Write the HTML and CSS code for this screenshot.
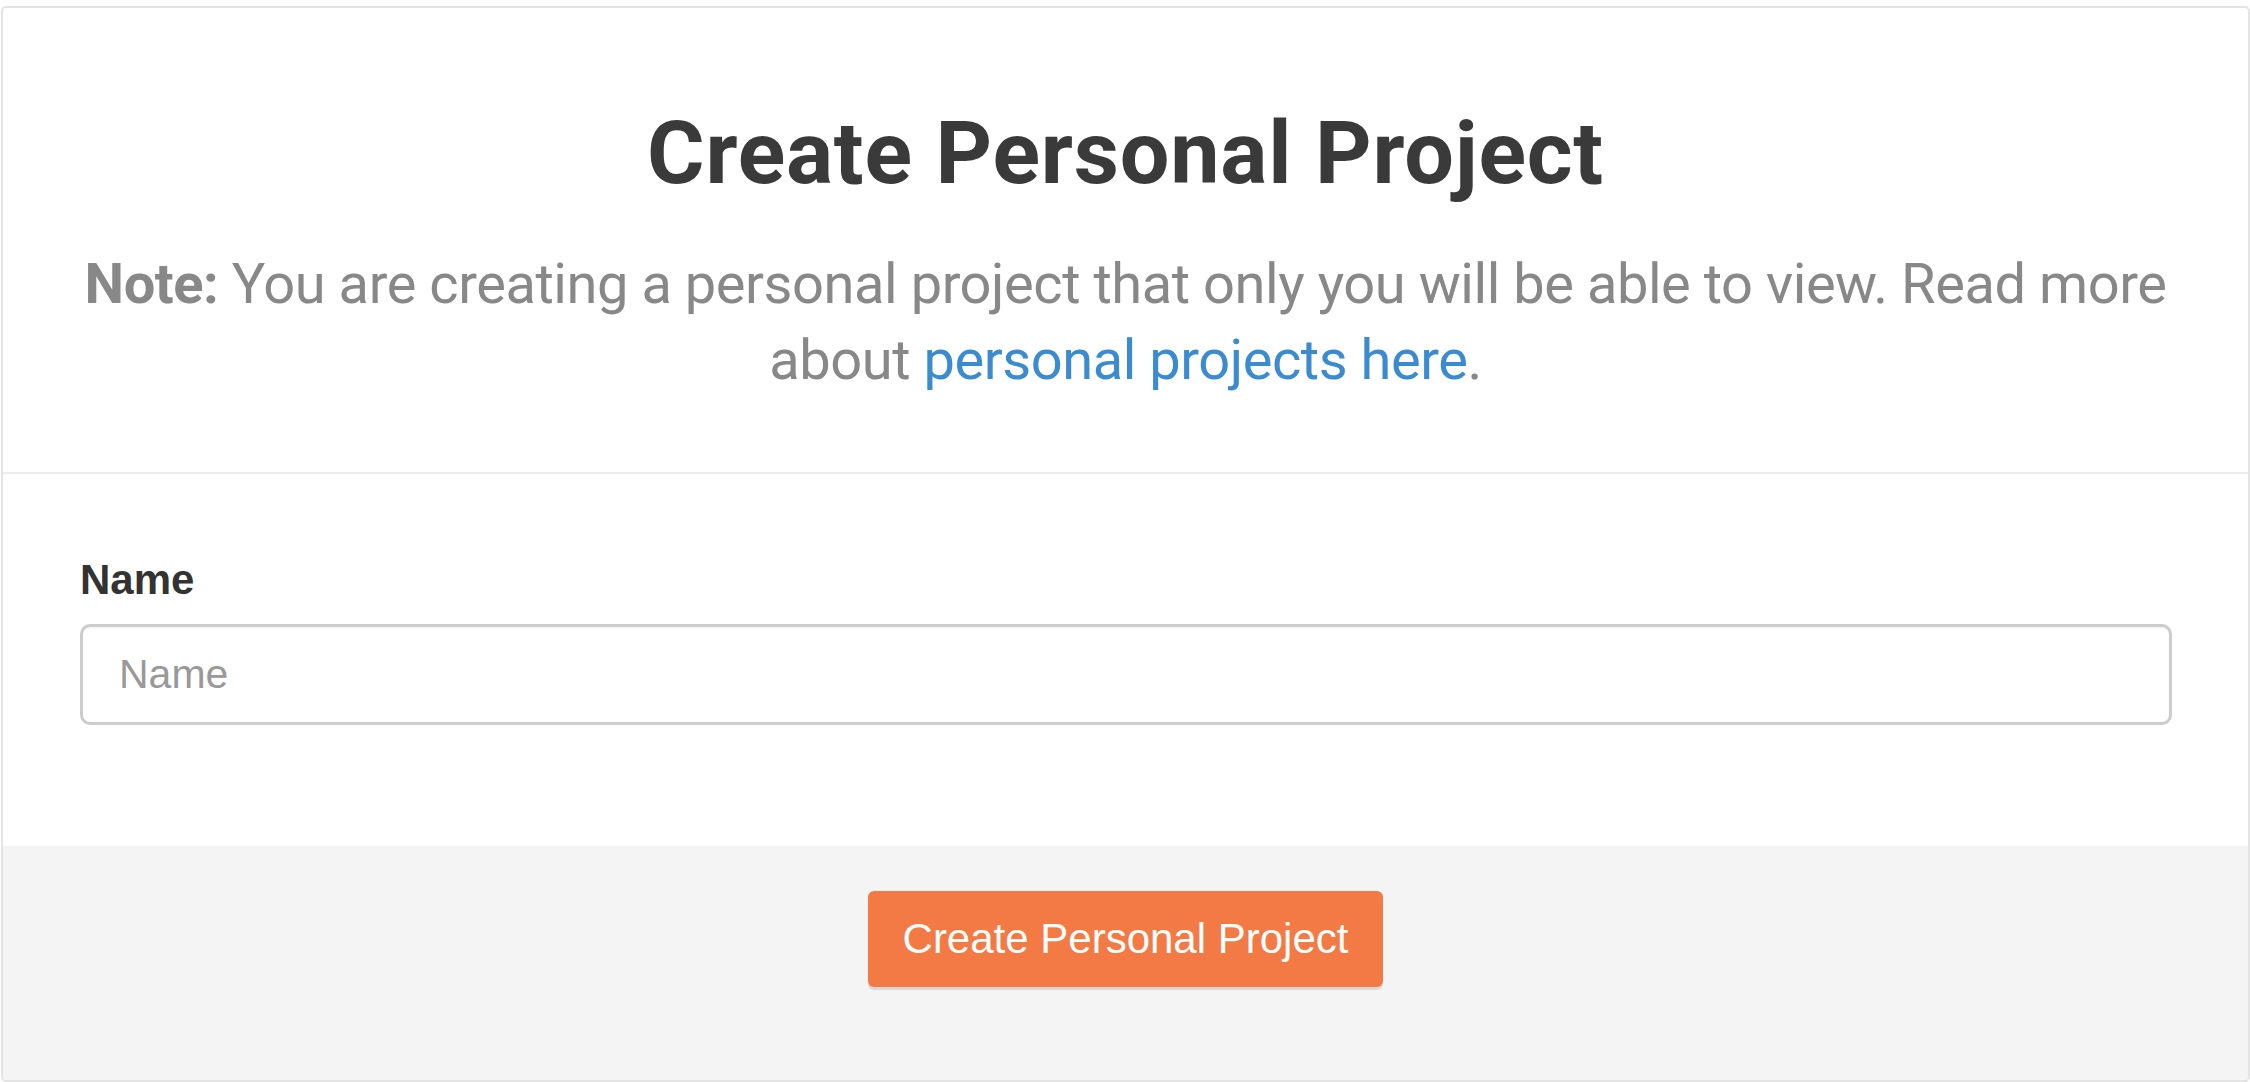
FILE: index.html
```html
<!DOCTYPE html>
<html lang="en">
<head>
<meta charset="utf-8">
<title>Create Personal Project</title>
<link rel="stylesheet" href="styles.css">
</head>
<body>
<div class="card">
  <header class="card-header">
    <h1 class="title">Create Personal Project</h1>
    <p class="note"><strong>Note:</strong> You are creating a personal project that only you will be able to view. Read more about <a href="#" class="link">personal projects here</a>.</p>
  </header>
  <form class="card-body">
    <label class="label" for="name">Name</label>
    <input class="input" id="name" type="text" placeholder="Name">
  </form>
  <footer class="card-footer">
    <button class="btn" type="button">Create Personal Project</button>
  </footer>
</div>
</body>
</html>
```
FILE: styles.css
```css
html, body {
  margin: 0;
  padding: 0;
  height: 100%;
  overflow: hidden;
  background: #ffffff;
}
body {
  padding: 6px 0 0 1px;
  box-sizing: border-box;
}
.card {
  box-sizing: border-box;
  height: 1076px;
  border: 2px solid #e4e4e4;
  border-radius: 5px;
  display: flex;
  flex-direction: column;
  overflow: hidden;
  background: #fff;
}
.card-header {
  padding: 92px 56px 74px;
  text-align: center;
  border-bottom: 2px solid #ececec;
}
.title {
  margin: 0;
  font-family: Roboto, "Liberation Sans", sans-serif;
  font-weight: 700;
  font-size: 88px;
  line-height: 1.2;
  letter-spacing: 0.8px;
  color: #3a3a3a;
}
.note {
  margin: 40px 0 0;
  font-family: Roboto, "Liberation Sans", sans-serif;
  font-size: 56px;
  line-height: 76px;
  letter-spacing: -0.45px;
  color: #888888;
}
.note strong {
  font-weight: 700;
}
.link {
  color: #3a8bcf;
  text-decoration: none;
}
.card-body {
  display: flex;
  flex-direction: column;
  padding: 81px 76px 121px 77px;
  margin: 0;
}
.label {
  font-family: "Liberation Sans", Arial, sans-serif;
  font-weight: 700;
  font-size: 42px;
  line-height: 1.2;
  color: #333333;
  margin-bottom: 19px;
}
.input {
  box-sizing: border-box;
  height: 101px;
  width: 100%;
  border: 3px solid #cccccc;
  border-radius: 10px;
  padding: 0 36px;
  font-family: "Liberation Sans", Arial, sans-serif;
  font-size: 41px;
  color: #333;
  background: #fff;
  box-shadow: inset 0 2px 2px rgba(0,0,0,0.04);
  outline: none;
}
.input::placeholder {
  color: #999999;
}
.card-footer {
  flex: 1;
  background: #f4f4f4;
  display: flex;
  justify-content: center;
  align-items: flex-start;
  padding-top: 45px;
}
.btn {
  box-sizing: border-box;
  height: 96px;
  padding: 0 35px;
  border: none;
  border-radius: 6px;
  background: #f47a45;
  color: #ffffff;
  font-family: "Liberation Sans", Arial, sans-serif;
  font-size: 42px;
  box-shadow: 0 3px 0 #d9d9d9;
  cursor: pointer;
}
```
